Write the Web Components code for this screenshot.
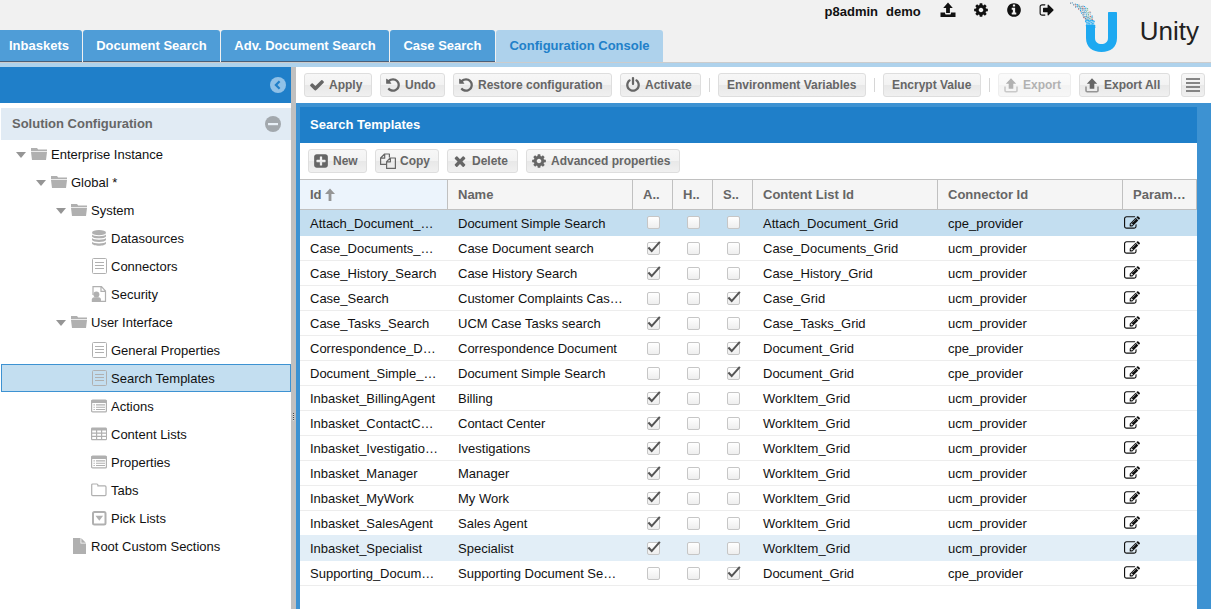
<!DOCTYPE html>
<html lang="en">
<head>
<meta charset="utf-8">
<title>Unity - Configuration Console</title>
<style>
  html, body { height: 100%; }
  body { margin: 0; overflow: hidden; background: #fff; font: 13px/16px "Liberation Sans", Arial, sans-serif; color: #222; }
</style>
</head>
<body>
<unity-app></unity-app>
<script>
const FA = {
  check: 'M1671 566q0 40-28 68l-724 724-136 136q-28 28-68 28t-68-28l-136-136-362-362q-28-28-28-68t28-68l136-136q28-28 68-28t68 28l294 295 656-657q28-28 68-28t68 28l136 136q28 28 28 68z',
  undo: 'M1664 896q0 156-61 298t-164 245-245 164-298 61q-172 0-327-72.5t-264-204.5q-7-10-6.5-22.5t8.5-20.5l137-138q10-9 25-9 16 2 23 12 73 95 179 147t225 52q104 0 198.5-40.5t163.5-109.5 109.5-163.5 40.5-198.5-40.5-198.5-109.5-163.5-163.5-109.5-198.5-40.5q-98 0-188 35.5t-160 101.5l137 138q31 30 14 69-17 40-59 40h-448q-26 0-45-19t-19-45v-448q0-42 40-59 39-17 69 14l130 129q107-101 244.5-156.5t284.5-55.5q156 0 298 61t245 164 164 245 61 298z',
  power: 'M1664 896q0 156-61 298t-164 245-245 164-298 61-298-61-245-164-164-245-61-298q0-182 80.5-343t226.5-270q43-32 95.5-25t83.5 50q32 42 24.5 94.5t-49.5 84.5q-98 74-151.5 181t-53.5 228q0 104 40.5 198.5t109.5 163.5 163.5 109.5 198.5 40.5 198.5-40.5 163.5-109.5 109.5-163.5 40.5-198.5q0-121-53.5-228t-151.5-181q-42-32-49.5-84.5t24.5-94.5q31-43 84-50t95 25q146 109 226.5 270t80.5 343zm-640-768v640q0 52-38 90t-90 38-90-38-38-90v-640q0-52 38-90t90-38 90 38 38 90z',
  plus: 'M1408 960v-128q0-26-19-45t-45-19h-320v-320q0-26-19-45t-45-19h-128q-26 0-45 19t-19 45v320h-320q-26 0-45 19t-19 45v128q0 26 19 45t45 19h320v320q0 26 19 45t45 19h128q26 0 45-19t19-45v-320h320q26 0 45-19t19-45zm256-544v960q0 119-84.5 203.5t-203.5 84.5h-960q-119 0-203.5-84.5t-84.5-203.5v-960q0-119 84.5-203.5t203.5-84.5h960q119 0 203.5 84.5t84.5 203.5z',
  times: 'M1490 1322q0 40-28 68l-136 136q-28 28-68 28t-68-28l-294-294-294 294q-28 28-68 28t-68-28l-136-136q-28-28-28-68t28-68l294-294-294-294q-28-28-28-68t28-68l136-136q28-28 68-28t68 28l294 294 294-294q28-28 68-28t68 28l136 136q28 28 28 68t-28 68l-294 294 294 294q28 28 28 68z',
  cog: 'M1152 896q0-106-75-181t-181-75-181 75-75 181 75 181 181 75 181-75 75-181zm512-109v222q0 12-8 23t-20 13l-185 28q-19 54-39 91 35 50 107 138 10 12 10 25t-9 23q-27 37-99 108t-94 71q-12 0-26-9l-138-108q-44 23-91 38-16 136-29 186-7 28-36 28h-222q-14 0-24.5-8.5t-11.5-21.5l-28-184q-49-16-90-37l-141 107q-10 9-25 9-14 0-25-11-126-114-165-168-7-10-7-23 0-12 8-23 15-21 51-66.5t54-70.5q-27-50-41-99l-183-27q-13-2-21-12.5t-8-23.5v-222q0-12 8-23t19-13l186-28q14-46 39-92-40-57-107-138-10-12-10-24 0-10 9-23 26-36 98.5-107.5t94.5-71.5q13 0 26 10l138 107q44-23 91-38 16-136 29-186 7-28 36-28h222q14 0 24.5 8.5t11.5 21.5l28 184q49 16 90 37l142-107q9-9 24-9 13 0 25 10 129 119 165 170 7 8 7 22 0 12-8 23-15 21-51 66.5t-54 70.5q26 50 41 98l183 28q13 2 21 12.5t8 23.5z',
  info: 'M1152 1376v-160q0-14-9-23t-23-9h-96v-512q0-14-9-23t-23-9h-320q-14 0-23 9t-9 23v160q0 14 9 23t23 9h96v320h-96q-14 0-23 9t-9 23v160q0 14 9 23t23 9h448q14 0 23-9t9-23zm-128-896v-160q0-14-9-23t-23-9h-192q-14 0-23 9t-9 23v160q0 14 9 23t23 9h192q14 0 23-9t9-23zm640 416q0 209-103 385.5t-279.5 279.5-385.5 103-385.5-103-279.5-279.5-103-385.5 103-385.5 279.5-279.5 385.5-103 385.5 103 279.5 279.5 103 385.5z',
  signout: 'M704 1440q0 4 1 20t.5 26.5-3 23.5-10 19.5-20.5 6.5h-320q-119 0-203.5-84.5t-84.5-203.5v-704q0-119 84.5-203.5t203.5-84.5h320q13 0 22.5 9.5t9.5 22.5q0 4 1 20t.5 26.5-3 23.5-10 19.5-20.5 6.5h-320q-66 0-113 47t-47 113v704q0 66 47 113t113 47h312l11.5 1 11.5 3 8 5.5 7 9 2 13.5zm928-544q0 26-19 45l-544 544q-19 19-45 19t-45-19-19-45v-288h-448q-26 0-45-19t-19-45v-384q0-26 19-45t45-19h448v-288q0-26 19-45t45-19 45 19l544 544q19 19 19 45z',
  edit: 'M888 1184l116-116-152-152-116 116v56h96v96h56zm440-720q-16-16-33 1l-350 350q-17 17-1 33t33-1l350-350q17-17 1-33zm80 594v190q0 119-84.5 203.5t-203.5 84.5h-832q-119 0-203.5-84.5t-84.5-203.5v-832q0-119 84.5-203.5t203.5-84.5h832q63 0 117 25 15 7 18 23 3 17-9 29l-49 49q-14 14-32 8-23-6-45-6h-832q-66 0-113 47t-47 113v832q0 66 47 113t113 47h832q66 0 113-47t47-113v-126q0-13 9-22l64-64q15-15 35-7t20 29zm-96-738l288 288-672 672h-288v-288zm444 132l-92 92-288-288 92-92q28-28 68-28t68 28l152 152q28 28 28 68t-28 68z'
};
// Hand-drawn glyphs on a 16-unit grid
const DRAWN = {
  upload: '<path d="M8 .5 12.8 6H9.9v5H6.1V6H3.2z"/><path d="M.5 10.500h4.600v1.200c0 .5.400.800.800.800h4.200c.5 0 .800-.300.800-.800v-1.200h4.600V15H.5z"/>',
  export: '<path d="M8 1.200 13.200 6.800h-2.900v5H5.700v-5H2.800z"/><path d="M2 9.500v4c0 .7.400 1.200 1.200 1.200h9.600c.8 0 1.200-.5 1.200-1.200v-4" fill="none" stroke="currentColor" stroke-opacity=".65" stroke-width="1.6"/>',
  copy: '<g fill="none" stroke="currentColor" stroke-width="1.2" stroke-linejoin="round"><path d="M6.4 11.4H.6V5L4.600 1h4.800v3.600M.8 5.200h3.900V1.100"/><path d="M6.600 8.600 10.200 5h5.200v10.400H6.600zM6.800 8.800h3.600V5.200"/></g>',
  menu: '<path d="M1 1h14v2H1zM1 5h14v2H1zM1 9h14v2H1zM1 13h14v2H1z"/>',
  folder: '<path d="M0 2h6l1.200 1.600H16v1.300H0z"/><path d="M0 5.800h16L15 14H1z"/>',
  database: '<ellipse cx="8" cy="2.700" rx="7" ry="2.600"/><path d="M1 4.400c1 2.300 13 2.300 14 0v2c-1 2.600-13 2.600-14 0zM1 8.100c1 2.300 13 2.300 14 0v2c-1 2.600-13 2.600-14 0zM1 11.800c1 2.300 13 2.300 14 0v1.600c-1 3-13 3-14 0z"/>',
  doc: '<rect x="1.500" y=".5" width="14" height="15" rx="1" fill="none" stroke="currentColor"/><path d="M4 4h9v1H4zM4 7h9v1H4zM4 10h9v1H4z"/>',
  security: '<path d="M2 9V.7h8.500L14.500 5v10.300H10M10 1v4.400h4.200" fill="none" stroke="currentColor" stroke-width="1.200"/><circle cx="5.400" cy="8.600" r="3"/><path d="M.8 16v-2.400c0-1.500 1-2.400 2.400-2.400h4.400c1.500 0 2.400.9 2.400 2.400V16z"/>',
  panel: '<rect x=".6" y="2.100" width="14.800" height="11.800" rx="1" fill="none" stroke="currentColor" stroke-width="1.200"/><path d="M.5 2h15v3H.5zM2.500 6.300h1.300v1.100H2.500zM5 6.300h9v1.100H5zM2.500 8.700h1.300v1.100H2.500zM5 8.700h9v1.100H5zM2.500 11h1.300v1.100H2.500zM5 11h9v1.100H5z"/>',
  grid: '<path fill-rule="evenodd" d="M1.500 1.500h13c.8 0 1.500.6 1.500 1.400v10c0 .8-.7 1.400-1.500 1.400h-13c-.8 0-1.500-.6-1.500-1.400v-10C0 2 .7 1.500 1.500 1.500zM1.200 4.500v2h3.800v-2zm5 0v2h3.800v-2zm5 0v2H15v-2zM1.200 7.700v2h3.800v-2zm5 0v2h3.800v-2zm5 0v2H15v-2zM1.200 11v2h3.800v-2zm5 0v2h3.800v-2zm5 0v2H15v-2z"/>',
  tab: '<path d="M.7 12.600V3c0-.6.4-1 1-1h4.200c.6 0 1 .4 1 1v.9h7.100c.6 0 1 .4 1 1v7.700c0 .6-.4 1-1 1H1.700c-.6 0-1-.4-1-1z" fill="none" stroke="currentColor" stroke-width="1.200"/>',
  pick: '<rect x="2" y="2" width="12.500" height="12.500" rx="1.500" fill="none" stroke="currentColor" stroke-width="2"/><path d="M4.500 5.800h7.600L8.300 10.800z"/>',
  page: '<path d="M2 0h7.500v5.500H15V16H2z"/><path d="M10.300.3v4.400h4.500z"/>',
  sort: '<path d="M8 1.500 13 7H9.400v7H6.600V7H3z"/>',
  collapse: '<circle cx="8" cy="8" r="8"/><path d="M9.600 4.300 5.900 8l3.700 3.700" fill="none" stroke="#1f7fc9" stroke-width="2.200"/>',
  minus: '<circle cx="8" cy="8" r="8"/><path d="M3 7h10v2.200H3z" fill="#e8f0f7"/>',
  tick: '<path d="M1.500 8 5 11.800 13.700 2" fill="none" stroke="currentColor" stroke-width="2.200"/>'
};

function define(name, css, html, init) {
  customElements.define(name, class extends HTMLElement {
    constructor() {
      super();
      this.attachShadow({ mode: 'open' });
    }
    connectedCallback() {
      const body = typeof html === 'function' ? html(this) : html;
      this.shadowRoot.innerHTML = '<style>' + css + '</style>' + body;
      if (init) init(this);
    }
  });
}

// Rounds a text-sized control up to a whole pixel so its borders stay crisp
function snapWidth(el) {
  const b = el.shadowRoot.querySelector('button');
  const w = b.getBoundingClientRect().width;
  if (w) b.style.minWidth = Math.ceil(w) + 'px';
}

define('ui-icon', ':host{display:block;flex:none;width:16px;height:16px}svg{display:block;width:100%;height:100%;fill:currentColor}', el => {
  const n = el.getAttribute('name');
  return FA[n] ? `<svg viewBox="0 0 1792 1792" aria-hidden="true"><path d="${FA[n]}"/></svg>`
               : `<svg viewBox="0 0 16 16" aria-hidden="true">${DRAWN[n]}</svg>`;
});

define('tool-button', `
  :host{display:block;flex:none}
  button{display:flex;align-items:center;gap:4px;height:24px;box-sizing:border-box;margin:0;padding:0 8px;border:1px solid #dedede;border-radius:3px;
    background:linear-gradient(#f7f7f7,#f2f2f2 50%,#e8e8e8 50%,#f0f0f0);font:bold 12px/16px "Liberation Sans",Arial,sans-serif;color:#666;white-space:nowrap}
  button.i{padding-left:4px}
  button.only{padding:0 3px;color:#858585}
  button:disabled{opacity:.5}`,
  el => {
    const icon = el.getAttribute('icon'), label = el.getAttribute('label');
    return `<button type="button" class="${icon ? 'i' : ''} ${label ? 'only' : ''}" ${el.hasAttribute('disabled') ? 'disabled' : ''} ${label ? `aria-label="${label}"` : ''}>${icon ? `<ui-icon name="${icon}"></ui-icon>` : ''}<slot></slot></button>`;
  }, snapWidth);

define('tool-bar', `
  :host{display:flex;align-items:center;gap:8px;height:36px;box-sizing:border-box;padding:0 6px 0 8px;background:#fff;flex:none}
  ::slotted(hr){width:1px;height:14px;margin:0;border:0;background:#d6d6d6;flex:none}
  ::slotted(.end){margin-left:auto}`, '<slot></slot>');

define('tab-item', `
  :host{display:block}
  button{display:block;height:32px;box-sizing:border-box;margin:0;border:0;border-bottom:1px solid #4b5f78;padding:0 13px;border-radius:3px 3px 0 0;background:#4f9dd7;color:#fff;font:bold 13px/16px "Liberation Sans",Arial,sans-serif;white-space:nowrap}
  :host(:first-child) button{padding-left:9px;border-top-left-radius:0}
  :host([active]) button{background:#aed2ec;color:#2180c9;border-bottom-color:#aed2ec}`,
  el => `<button type="button" role="tab" aria-selected="${el.hasAttribute('active')}"><slot></slot></button>`, snapWidth);

define('unity-logo', `
  :host{display:flex;align-items:flex-start}
  svg{display:block;width:48px;height:54px}
  span{margin:15px 0 0 22px;font-size:26px;line-height:32px;color:#222}`,
  '<svg viewBox="0 0 48 54" aria-hidden="true"><path fill="#1ea9f1" d="M16 25h9v13c0 4 3 6 6.500 6s6.500-2 6.500-6V13c0-.6.400-1 1-1h7c.6 0 1 .400 1 1v25c0 9-6.500 14-15.500 14S16 47 16 38z"/><g></g></svg><span>Unity</span>',
  el => {
    const colors = ['#4aa9dc', '#d8706a', '#5f9fc4', '#9ab7c9', '#6a7f98', '#7fbf9c', '#1ea9f1'];
    // [y, left edge, right edge] of the particle trail
    const edges = [[2, 0, 3], [4, 3, 10], [6, 5, 15], [8, 8, 18], [12, 11, 21], [16, 13, 23], [20, 15, 24], [26, 16, 25]];
    let out = '';
    for (let s = 0; s < edges.length - 1; s++) {
      const [y0, l0, r0] = edges[s], [y1, l1, r1] = edges[s + 1];
      const step = y0 >= 16 ? 1.200 : 1.600;
      for (let y = y0; y < y1; y += step) {
        const f = (y - y0) / (y1 - y0), l = l0 + (l1 - l0) * f, r = r0 + (r1 - r0) * f;
        let k = Math.round(y * 3);
        for (let x = l + (k % 2) * .700; x < r - .5; x += step + .2) {
          k += 5;
          const color = y > 19 ? '#1ea9f1' : colors[k % 7];
          out += `<rect x="${x.toFixed(1)}" y="${(y + (k % 3) * .3).toFixed(1)}" width="1.100" height="1.100" fill="${color}"/>`;
        }
      }
    }
    el.shadowRoot.querySelector('g').innerHTML = out;
  });

define('app-header', `
  :host{display:flex;justify-content:space-between;height:62px;flex:none;background:#f1f1f1;border-bottom:1px solid #ccc;box-shadow:0 4px #aed2ec;margin-bottom:4px}
  nav{display:flex;align-items:flex-end;gap:1px}
  .user{display:flex;align-items:flex-start;padding-right:12px;color:#111}
  .who{display:flex;gap:8px;padding-top:4px;font-weight:bold;margin-right:19px}
  .links{display:flex;gap:17px;padding-top:2px;margin-right:15px}
  a{display:block;color:#111}`,
  `<nav role="tablist"><tab-item>Inbaskets</tab-item><tab-item>Document Search</tab-item><tab-item>Adv. Document Search</tab-item><tab-item>Case Search</tab-item><tab-item active>Configuration Console</tab-item></nav>
   <div class="user"><div class="who"><span>p8admin</span><span>demo</span></div>
   <div class="links"><a href="#upload" aria-label="Upload"><ui-icon name="upload"></ui-icon></a><a href="#settings" aria-label="Settings"><ui-icon name="cog"></ui-icon></a><a href="#about" aria-label="About"><ui-icon name="info"></ui-icon></a><a href="#logout" aria-label="Log out"><ui-icon name="signout"></ui-icon></a></div>
   <unity-logo></unity-logo></div>`);

define('tree-item', `
  :host{display:block}
  a{display:flex;align-items:center;height:28px;box-sizing:border-box;border:1px solid transparent;color:#111;text-decoration:none;white-space:nowrap}
  a.on{background:#c3def0;border-color:#3d92d2}
  i{width:16px;flex:none}
  i.open::before{content:"";display:block;margin:2px 0 0 1px;border:5px solid transparent;border-top:6px solid #959595;border-bottom:0;width:0}
  ui-icon{color:#b0b0b0;margin-right:4px}
  span{padding-top:2px}`,
  el => `<a href="#" role="treeitem" class="${el.hasAttribute('selected') ? 'on' : ''}" style="padding-left:${13 + 20 * +el.getAttribute('level')}px"><i class="${el.hasAttribute('open') ? 'open' : ''}"></i><ui-icon name="${el.getAttribute('icon')}"></ui-icon><span><slot></slot></span></a>`);

define('side-bar', `
  :host{display:flex;flex-direction:column;width:291px;flex:none;background:#fff}
  .top{display:flex;justify-content:flex-end;align-items:center;height:36px;padding-right:5px;background:#1f7fc9}
  h2{display:flex;justify-content:space-between;align-items:center;height:32px;margin:5px 0 0 1px;padding:0 10px 0 11px;background:#e1ebf4;color:#666;font-size:13px;line-height:16px}
  button{display:block;border:0;padding:0;background:none;color:#90c1e7}
  h2 button{color:#a2a8ad}
  div[role=tree]{margin-left:1px}`,
  `<div class="top"><button type="button" aria-label="Collapse"><ui-icon name="collapse"></ui-icon></button></div>
   <h2>Solution Configuration<button type="button" aria-label="Fold"><ui-icon name="minus"></ui-icon></button></h2>
   <div role="tree">
    <tree-item level="0" icon="folder" open>Enterprise Instance</tree-item>
    <tree-item level="1" icon="folder" open>Global *</tree-item>
    <tree-item level="2" icon="folder" open>System</tree-item>
    <tree-item level="3" icon="database">Datasources</tree-item>
    <tree-item level="3" icon="doc">Connectors</tree-item>
    <tree-item level="3" icon="security">Security</tree-item>
    <tree-item level="2" icon="folder" open>User Interface</tree-item>
    <tree-item level="3" icon="doc">General Properties</tree-item>
    <tree-item level="3" icon="doc" selected>Search Templates</tree-item>
    <tree-item level="3" icon="panel">Actions</tree-item>
    <tree-item level="3" icon="grid">Content Lists</tree-item>
    <tree-item level="3" icon="panel">Properties</tree-item>
    <tree-item level="3" icon="tab">Tabs</tree-item>
    <tree-item level="3" icon="pick">Pick Lists</tree-item>
    <tree-item level="2" icon="page">Root Custom Sections</tree-item>
   </div>`);

define('split-bar', `
  :host{display:flex;align-items:center;justify-content:center;width:5px;flex:none;background:#c0c0c0}
  span{width:1px;height:8px;margin-top:158px;background:repeating-linear-gradient(#444 0 1px,#ddd 1px 2px)}`, '<span></span>');

define('check-cell', `
  :host{display:flex;justify-content:center}
  label{position:relative;display:block;width:13px;height:13px}
  input{appearance:none;display:block;width:13px;height:13px;box-sizing:border-box;margin:0;border:1px solid #c6c6c6;border-radius:2px;background:linear-gradient(#fff,#eee)}
  ui-icon{position:absolute;left:0;top:-2px;width:15px;height:15px;color:#555}`,
  el => {
    const on = el.hasAttribute('checked');
    return `<label><input type="checkbox" aria-label="${el.getAttribute('label')}" ${on ? 'checked' : ''}>${on ? '<ui-icon name="tick"></ui-icon>' : ''}</label>`;
  });

// id, name, ticked column (A / H / S), content list, connector
const ROWS = [
  ['Attach_Document_…', 'Document Simple Search', '', 'Attach_Document_Grid', 'cpe_provider'],
  ['Case_Documents_…', 'Case Document search', 'A', 'Case_Documents_Grid', 'ucm_provider'],
  ['Case_History_Search', 'Case History Search', 'A', 'Case_History_Grid', 'ucm_provider'],
  ['Case_Search', 'Customer Complaints Cas…', 'S', 'Case_Grid', 'ucm_provider'],
  ['Case_Tasks_Search', 'UCM Case Tasks search', 'A', 'Case_Tasks_Grid', 'ucm_provider'],
  ['Correspondence_D…', 'Correspondence Document', 'S', 'Document_Grid', 'cpe_provider'],
  ['Document_Simple_…', 'Document Simple Search', 'S', 'Document_Grid', 'cpe_provider'],
  ['Inbasket_BillingAgent', 'Billing', 'A', 'WorkItem_Grid', 'ucm_provider'],
  ['Inbasket_ContactC…', 'Contact Center', 'A', 'WorkItem_Grid', 'ucm_provider'],
  ['Inbasket_Ivestigatio…', 'Ivestigations', 'A', 'WorkItem_Grid', 'ucm_provider'],
  ['Inbasket_Manager', 'Manager', 'A', 'WorkItem_Grid', 'ucm_provider'],
  ['Inbasket_MyWork', 'My Work', 'A', 'WorkItem_Grid', 'ucm_provider'],
  ['Inbasket_SalesAgent', 'Sales Agent', 'A', 'WorkItem_Grid', 'ucm_provider'],
  ['Inbasket_Specialist', 'Specialist', 'A', 'WorkItem_Grid', 'ucm_provider'],
  ['Supporting_Docum…', 'Supporting Document Se…', 'S', 'Document_Grid', 'cpe_provider']
];

define('data-grid', `
  :host{display:block;background:#fff}
  table{width:100%;table-layout:fixed;border-collapse:separate;border-spacing:0}
  .id{width:148px}.flag{width:40px}.par{width:74px}
  th,td{box-sizing:border-box;padding:0 0 0 10px;text-align:left;white-space:nowrap;overflow:hidden;vertical-align:middle}
  th{height:31px;border:solid #c0c0c0;border-width:1px 1px 1px 0;background:#f5f5f5;color:#666;font-size:13px;line-height:16px}
  th:first-child{background:#ecf4fc}
  th div{display:flex;align-items:center}
  th ui-icon{color:#959595}
  td{height:25px;padding-top:2px;border-bottom:1px solid #ededed;color:#111}
  tr.sel td{height:26px;background:#c3def0;border-color:#c3def0}
  tr.pre td{border-color:#e2eef7}
  tr.hov td{background:#e2eef7;border-color:#e2eef7}
  td.c{padding:0 0 0 1px}
  td.e{padding:0 0 0 1px}
  button{display:block;border:0;padding:0;background:none;color:#111}`,
  `<table><colgroup><col class="id"><col><col class="flag"><col class="flag"><col class="flag"><col><col><col class="par"></colgroup>
   <thead><tr><th scope="col"><div>Id<ui-icon name="sort"></ui-icon></div></th><th scope="col">Name</th><th scope="col">A..</th><th scope="col">H..</th><th scope="col">S..</th><th scope="col">Content List Id</th><th scope="col">Connector Id</th><th scope="col">Param…</th></tr></thead>
   <tbody>${ROWS.map((r, i) => `<tr class="${i === 0 ? 'sel' : i === 12 ? 'pre' : i === 13 ? 'hov' : ''}"><td>${r[0]}</td><td>${r[1]}</td>${['A', 'H', 'S'].map(f => `<td class="c"><check-cell label="${f}" ${r[2] === f ? 'checked' : ''}></check-cell></td>`).join('')}<td>${r[3]}</td><td>${r[4]}</td><td class="e"><button type="button" aria-label="Edit"><ui-icon name="edit"></ui-icon></button></td></tr>`).join('')}</tbody></table>`);

define('config-panel', `
  :host{display:flex;flex-direction:column;flex:1;min-height:0;border:solid #3d92d2;border-width:4px 14px 0 4px;background:#fff}
  h1{flex:none;margin:0;padding:10px;height:16px;background:#1f7fc9;color:#fff;font-size:13px;line-height:16px}`,
  `<h1>Search Templates</h1>
   <tool-bar><tool-button icon="plus">New</tool-button><tool-button icon="copy">Copy</tool-button><tool-button icon="times">Delete</tool-button><tool-button icon="cog">Advanced properties</tool-button></tool-bar>
   <data-grid></data-grid>`);

define('unity-app', `
  :host{display:flex;flex-direction:column;height:100vh}
  .body{display:flex;flex:1;min-height:0}
  main{display:flex;flex-direction:column;flex:1;min-width:0}`,
  `<app-header></app-header>
   <div class="body"><side-bar></side-bar><split-bar></split-bar>
   <main><tool-bar><tool-button icon="check">Apply</tool-button><tool-button icon="undo">Undo</tool-button><tool-button icon="undo">Restore configuration</tool-button><tool-button icon="power">Activate</tool-button><hr><tool-button>Environment Variables</tool-button><hr><tool-button>Encrypt Value</tool-button><hr><tool-button icon="export" disabled>Export</tool-button><tool-button icon="export">Export All</tool-button><tool-button class="end" icon="menu" label="Menu"></tool-button></tool-bar>
   <config-panel></config-panel></main></div>`);
</script>
</body>
</html>
